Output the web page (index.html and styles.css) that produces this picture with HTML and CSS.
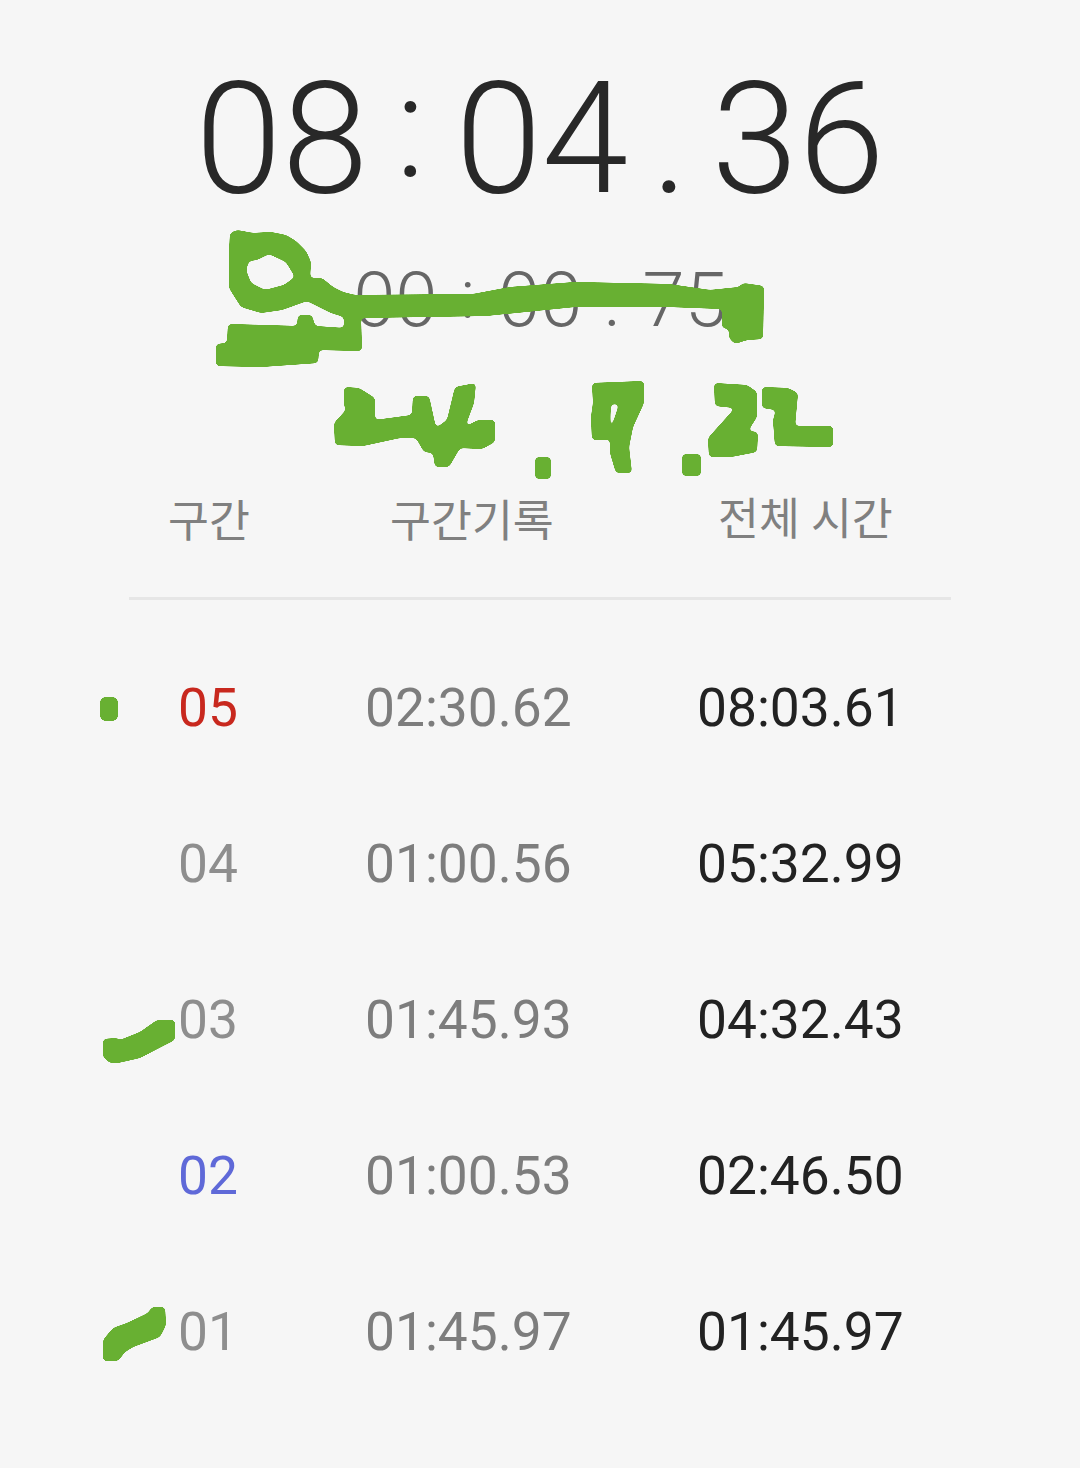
FILE: index.html
```html
<!DOCTYPE html>
<html lang="ko">
<head>
    <meta charset="UTF-8">
    <meta name="viewport" content="width=device-width, initial-scale=1.0">
    <title>Stopwatch</title>
    <link rel="stylesheet" href="styles.css">
</head>
<body>
    <main class="watch">
        <div class="total-time">
            <span>08</span><span class="colon">:</span><span>04</span><span class="dot">.</span><span>36</span>
        </div>
        <div class="lap-time">
            <span>00</span><span class="colon">:</span><span>00</span><span class="dot">.</span><span>75</span>
        </div>

        <div class="lap-head">
            <span class="head-lap">구간</span>
            <span class="head-split">구간기록</span>
            <span class="head-total">전체 시간</span>
        </div>
        <hr class="divider">

        <ul class="laps">
            <li class="lap"><span class="num fastest-no">05</span><span class="split">02:30.62</span><span class="sum">08:03.61</span></li>
            <li class="lap"><span class="num">04</span><span class="split">01:00.56</span><span class="sum">05:32.99</span></li>
            <li class="lap"><span class="num">03</span><span class="split">01:45.93</span><span class="sum">04:32.43</span></li>
            <li class="lap"><span class="num best-no">02</span><span class="split">01:00.53</span><span class="sum">02:46.50</span></li>
            <li class="lap"><span class="num">01</span><span class="split">01:45.97</span><span class="sum">01:45.97</span></li>
        </ul>
    </main>

    <!-- green marker scribbles drawn over the screenshot -->
    <svg class="scribble" width="1080" height="1468" viewBox="0 0 1080 1468" aria-hidden="true">
        <defs>
            <filter id="marker" x="0" y="0" width="100%" height="100%" color-interpolation-filters="sRGB">
                <feGaussianBlur stdDeviation="2.2"/>
                <feColorMatrix type="matrix" values="0 0 0 0 0.408  0 0 0 0 0.69  0 0 0 0 0.196  0 0 0 14 -6.2"/>
            </filter>
        </defs>
        <g filter="url(#marker)">
            <path fill-rule="evenodd" d="M230 233 L237 230 L253 233 L271 232 L286 235 L296 241 L306 251 L311 262 L310 278 L322 278 L333 287 L343 292 L355 295 L473 294 L510 287 L575 282 L669 284 L710 290 L739 287 L743 283 L764 286 L763 339 L747 340 L735 344 L729 338 L729 329 L722 328 L722 309 L669 307 L575 307 L486 316 L361 318 L362 351 L319 350 L318 363 L261 367 L216 366 L216 344 L227 343 L228 324 L297 326 L298 315 L312 315 L315 326 L344 328 L344 317 L331 313 L307 301 L282 310 L261 313 L241 307 L229 288 L229 253 Z
            M269 254 L286 262 L295 277 L284 285 L265 290 L251 283 L246 270 L249 261 L257 260 Z"/>
            <path d="M344 387 L359 388 L375 398 L375 420 L412 415 L413 396 L429 396 L436 428 L447 420 L455 387 L476 383 L474 403 L465 427 L478 420 L495 420 L495 442 L482 449 L460 448 L449 467 L435 467 L433 453 L424 452 L416 438 L400 438 L363 446 L335 445 L334 423 L346 410 L344 405 Z"/>
            <rect x="535" y="457" width="16" height="22" rx="3"/>
            <path d="M592 383 L644 381 L644 403 L633 427 L629 447 L632 473 L616 473 L610 453 L610 433 L619 404 L611 404 L609 440 L592 440 L591 417 L593 403 Z"/>
            <rect x="682" y="454" width="19" height="22" rx="3"/>
            <path d="M714 383 L747 385 L757 392 L757 417 L748 431 L758 432 L757 452 L731 457 L709 457 L708 438 L735 408 L715 406 Z"/>
            <path d="M762 387 L788 388 L798 393 L795 426 L833 426 L833 447 L775 446 L773 420 L776 410 L762 408 Z"/>
            <rect x="100" y="697" width="18" height="24" rx="5"/>
            <path d="M103 1039 L117 1038 L120 1040 L140 1032 L157 1020 L175 1020 L175 1040 L165 1045 L140 1058 L118 1063 L110 1063 L103 1057 Z"/>
            <path d="M103 1340 L113 1328 L127 1323 L148 1313 L152 1307 L165 1307 L166 1325 L160 1337 L133 1347 L125 1352 L118 1361 L103 1361 Z"/>
        </g>
    </svg>
</body>
</html>
```

FILE: styles.css
```css
body {
    margin: 0;
    background-color: #f6f6f6;
    font-family: Roboto, "Noto Sans CJK KR", sans-serif;
}
.watch {
    width: 1080px;
    height: 1468px;
    overflow: hidden;
    padding-top: 47px;
    box-sizing: border-box;
}
.total-time {
    display: flex;
    justify-content: center;
    align-items: baseline;
    height: 184px;
    font-size: 156px;
    line-height: 184px;
    font-weight: 300;
    color: #282828;
}
/* the clock colon sits higher and tighter than the plain glyph */
.total-time .colon {
    margin: 0 30px 0 27px;
    font-size: 142px;
    transform: translateY(-16px);
}
.total-time .dot {
    margin: 0 23px;
}
.lap-time {
    display: flex;
    justify-content: center;
    align-items: baseline;
    height: 90px;
    margin-top: 24px;
    font-size: 76px;
    line-height: 90px;
    font-weight: 300;
    color: #666;
}
.lap-time .colon {
    margin: 0 23px;
    font-size: 69px;
    transform: translateY(-8px);
}
.lap-time .dot {
    margin: 0 21px;
}
.lap-head {
    display: flex;
    margin-top: 145px;
    height: 64px;
    font-size: 44.5px;
    line-height: 64px;
    color: #808080;
}
.head-lap {
    margin-left: 168px;
    width: 222px;
}
.head-split {
    width: 328px;
}
.head-total {
    margin-top: -2px;
}
.divider {
    margin: 43px 0 0 129px;
    width: 822px;
    height: 3px;
    border: 0;
    background-color: #e6e6e6;
}
.laps {
    list-style: none;
    margin: 30px 0 0;
    padding: 0 0 0 178px;
}
.lap {
    display: flex;
    height: 156px;
    align-items: center;
    font-size: 53.3px;
    line-height: 156px;
}
.num {
    width: 187px;
    color: #8e8e8e;
}
.fastest-no {
    color: #c8281e;
}
.best-no {
    color: #5f69d8;
}
.split {
    width: 332px;
    color: #7d7d7d;
}
.sum {
    color: #222;
}
.scribble {
    position: absolute;
    top: 0;
    left: 0;
}
```
